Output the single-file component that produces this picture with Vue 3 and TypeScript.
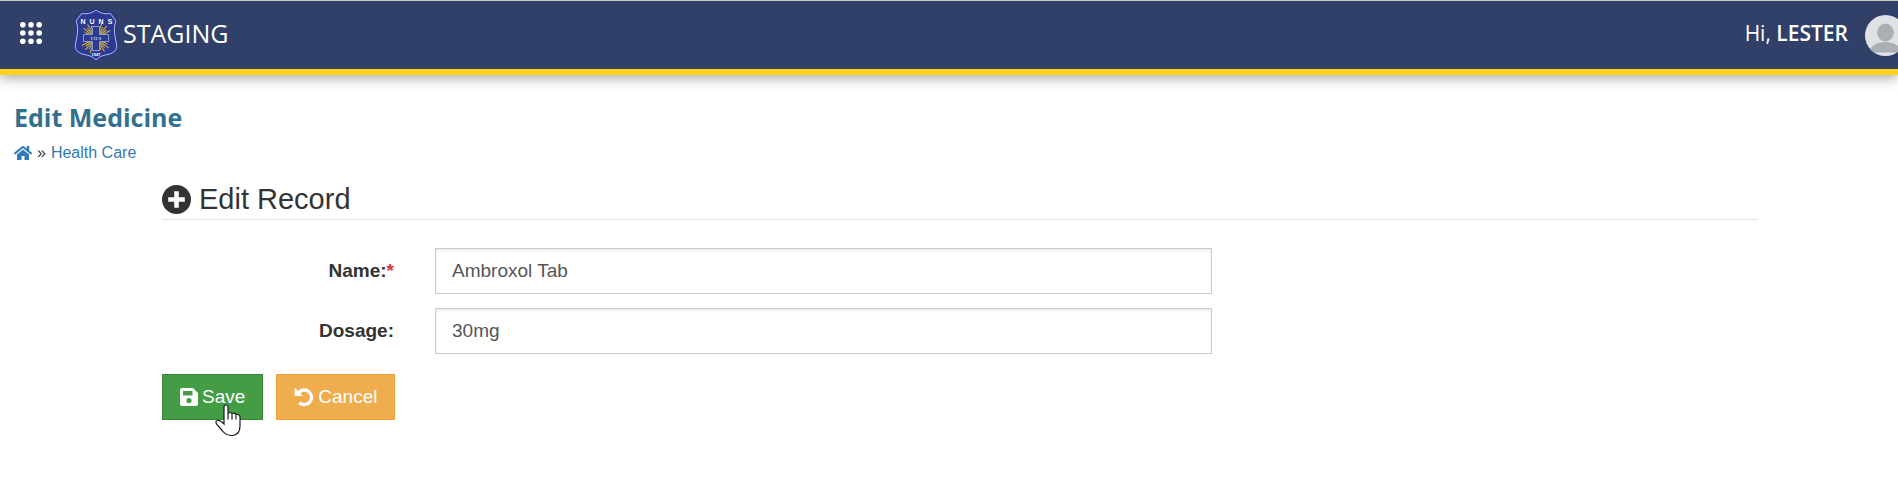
<script setup lang="ts">
import { ref } from 'vue'

const name = ref('Ambroxol Tab')
const dosage = ref('30mg')
const dots = [0, 1, 2, 3, 4, 5, 6, 7, 8]
const rays = [28, 38, 48, 58, 68, 112, 122, 132, 142, 152, 208, 218, 228, 238, 248, 292, 302, 312, 322, 332]
</script>

<template>
  <div class="page">
    <header class="topbar">
      <button class="apps" type="button" aria-label="Applications">
        <svg viewBox="0 0 22 22" width="22" height="22">
          <circle v-for="d in dots" :key="d" :cx="2.8 + (d % 3) * 8.2" :cy="2.8 + Math.floor(d / 3) * 8.2" r="2.8" />
        </svg>
      </button>
      <a class="brand" href="#">
        <svg class="crest" viewBox="0 0 46 54" width="46" height="54" aria-hidden="true">
          <path d="M23 1C18 5 13 5.500 8 4.500L2 13C5 20 3 28 1.500 36C0 43 4 46 11 47.500C17 48.500 20 50 23 53C26 50 29 48.500 35 47.500C42 46 46 43 44.500 36C43 28 41 20 44 13L38 4.500C33 5.500 28 5 23 1Z" fill="#2c3a91" stroke="#26348f" stroke-width="2" />
          <path d="M23 2C18 6 13 6 8.500 5.500L3 13C6 20 4 28 2.500 36C1 42 5 45 11 46.500C17 47.500 20 49 23 52C26 49 29 47.500 35 46.500C41 45 45 42 43.500 36C42 28 40 20 43 13L37.500 5.500C33 6 28 6 23 2Z" fill="none" stroke="#b5bfe6" stroke-width="1" />
          <g stroke="#d8b838" stroke-width="1">
            <line v-for="(r, i) in rays" :key="r" x1="27" y1="30" :x2="i % 2 ? 39 : 36" y2="30" :transform="`rotate(${r} 23 30)`" />
          </g>
          <path d="M19.500 18.500H26.500V26.500H35.500V33.500H26.500V42.500H19.500V33.500H10.500V26.500H19.500Z" fill="#2c3a91" stroke="#8c9ac8" stroke-width="1" />
          <g class="crest-name">
            <text x="10" y="16">N</text>
            <text x="19" y="16">U</text>
            <text x="28" y="16">N</text>
            <text x="37" y="16">S</text>
          </g>
          <text x="23" y="32" class="crest-mono">I H S</text>
          <text x="23" y="48" class="crest-year">1947</text>
        </svg>
        <span>STAGING</span>
      </a>
      <div class="user">
        <span class="greeting">Hi, <b>LESTER</b></span>
        <svg class="avatar" viewBox="0 0 41 41" width="41" height="41" role="img" aria-label="Profile">
          <defs><clipPath id="face"><circle cx="20.500" cy="20.500" r="20.500" /></clipPath></defs>
          <g clip-path="url(#face)">
            <rect width="41" height="41" fill="#dfe2e5" />
            <ellipse cx="20.500" cy="17.500" rx="8.300" ry="9" fill="#a9b0b5" />
            <path d="M3 37.500C6 30 13 27 20.500 27S35 30 38 37.500Z" fill="#a9b0b5" />
          </g>
        </svg>
      </div>
    </header>

    <main>
      <h1>Edit Medicine</h1>
      <nav class="crumbs" aria-label="Breadcrumb">
        <a href="#" aria-label="Home">
          <svg viewBox="0 0 576 512" width="18" height="16" fill="currentColor">
            <path d="M280 148L96 300V464a16 16 0 0 0 16 16H224a16 16 0 0 0 16-16V368a16 16 0 0 1 16-16h64a16 16 0 0 1 16 16v96a16 16 0 0 0 16 16H464a16 16 0 0 0 16-16V300L296 148a12 12 0 0 0-16 0zM572 251L488 182V44a12 12 0 0 0-12-12h-56a12 12 0 0 0-12 12v72L318 43a48 48 0 0 0-61 0L4 251a12 12 0 0 0-1 17l25 31a12 12 0 0 0 17 2L280 107a12 12 0 0 1 16 0L531 301a12 12 0 0 0 17-2l25-31a12 12 0 0 0-1-17z" />
          </svg>
        </a>
        <span>»</span>
        <a href="#">Health Care</a>
      </nav>

      <form class="record" @submit.prevent>
        <h2>
          <svg viewBox="0 0 28 28" width="29" height="29" aria-hidden="true">
            <circle cx="14" cy="14" r="14" fill="#333" />
            <path d="M11.800 6h4.400v5.800H22v4.400h-5.800V22h-4.400v-5.800H6v-4.400h5.800z" fill="#fff" />
          </svg>
          Edit Record
        </h2>
        <div class="field">
          <label for="name">Name:<span class="required">*</span></label>
          <input id="name" v-model="name" type="text" required />
        </div>
        <div class="field">
          <label for="dosage">Dosage:</label>
          <input id="dosage" v-model="dosage" type="text" />
        </div>
        <div class="actions">
          <button class="save" type="submit">
            <svg viewBox="0 0 18 18" width="18" height="18" aria-hidden="true">
              <path fill="currentColor" fill-rule="evenodd" d="M2 0H13L18 5V16a2 2 0 0 1-2 2H2a2 2 0 0 1-2-2V2a2 2 0 0 1 2-2zM3 3V7.500H12.500V3zM9 10a2.600 2.600 0 1 0 0 5.200a2.600 2.600 0 0 0 0-5.200z" />
            </svg>
            Save
            <svg class="pointer" viewBox="0 0 26 32" width="26" height="32" aria-hidden="true">
              <path d="M9 20V3Q9 1 11 1T13 3V10Q13 8.500 15 8.500T17 10.500Q17 9 19 9.200T21 11.500Q21 10 23 10.500T25 13V22Q25 31 17 31.500Q11 31.500 7.500 27L1.500 20Q0 17 2.500 16.500Q5 16 9 20Z" fill="#fff" stroke="#1c1c28" stroke-width="1.200" />
              <path d="M13 10V15.500M17 10.500V15.500M21 11.500V15.500" stroke="#1c1c28" stroke-width="1.200" fill="none" />
            </svg>
          </button>
          <button class="cancel" type="button">
            <svg viewBox="0 0 20 20" width="20" height="20" aria-hidden="true">
              <path d="M4.500 5.800A7.300 7.300 0 1 1 5.300 15.700" fill="none" stroke="currentColor" stroke-width="3.400" />
              <path d="M1 1.500V8.500H8Z" fill="currentColor" stroke="currentColor" stroke-linejoin="round" />
            </svg>
            Cancel
          </button>
        </div>
      </form>
    </main>
  </div>
</template>

<style>
body {
  margin: 0;
  background: #fff;
}
</style>

<style scoped>
* {
  box-sizing: border-box;
}
.page {
  overflow-x: hidden;
  font-family: "Liberation Sans", Arial, sans-serif;
  color: #333;
}
a {
  color: #337ab7;
  text-decoration: none;
}
.topbar {
  display: flex;
  align-items: center;
  height: 75px;
  padding-left: 20px;
  background: #314069;
  border-top: 1px solid #c5c9c8;
  border-bottom: 6px solid #ffd21c;
  box-shadow: 0 3px 12px rgba(0, 0, 0, 0.35);
  color: #fff;
  font-family: "Open Sans", sans-serif;
}
.apps {
  display: flex;
  margin: 0 31px 4px 0;
  padding: 0;
  border: 0;
  background: none;
  fill: #fff;
}
.brand {
  display: flex;
  align-items: center;
  gap: 4px;
  color: #fff;
  font-size: 25px;
  line-height: 36px;
}
.brand span {
  padding-bottom: 4px;
}
.crest text {
  fill: #fff;
  text-anchor: middle;
  font-family: "Liberation Sans", sans-serif;
}
.crest .crest-name {
  font-size: 7px;
  font-weight: 700;
}
.crest .crest-mono {
  font-family: "Liberation Serif", serif;
  font-size: 5px;
}
.crest .crest-year {
  font-size: 4px;
  font-weight: 700;
}
.user {
  display: flex;
  align-items: center;
  gap: 17px;
  margin-left: auto;
  margin-right: -8px;
}
.greeting {
  padding-bottom: 4px;
  font-size: 21px;
  line-height: 30px;
}
.greeting b {
  font-weight: 600;
}
main {
  padding: 24px 14px;
}
h1 {
  margin: 0;
  color: #31708f;
  font: 700 25px/36px "Open Sans", sans-serif;
}
.crumbs {
  display: flex;
  align-items: center;
  gap: 5px;
  margin-top: 7px;
  font-size: 16px;
  line-height: 22px;
}
.crumbs svg {
  display: block;
}
.record {
  margin: 17px 126px 0 148px;
}
h2 {
  display: flex;
  align-items: center;
  gap: 8px;
  margin: 0 0 28px;
  padding-bottom: 2px;
  border-bottom: 1px solid #e5e5e5;
  font-size: 29px;
  font-weight: 400;
  line-height: 36px;
}
.field {
  display: grid;
  grid-template-columns: 232fr 777fr 505fr;
  column-gap: 41px;
  align-items: center;
  margin-bottom: 14px;
}
.field label {
  text-align: right;
  font-size: 19px;
  font-weight: 700;
}
.required {
  color: #dc3545;
}
.field input {
  width: 100%;
  height: 46px;
  padding: 0 16px;
  border: 1px solid #ccc;
  border-radius: 0;
  box-shadow: inset 0 2px 3px rgba(0, 0, 0, 0.08);
  outline: 0;
  color: #555;
  font: 19px "Liberation Sans", Arial, sans-serif;
}
.actions {
  display: flex;
  gap: 13px;
  margin-top: 20px;
}
.actions button {
  position: relative;
  display: flex;
  align-items: center;
  gap: 4px;
  height: 46px;
  padding: 0 17px;
  border: 1px solid;
  color: #fff;
  font: 19px "Liberation Sans", Arial, sans-serif;
}
.actions .save {
  background: #449d44;
  border-color: #398439;
}
.actions .cancel {
  background: #f0ad4e;
  border-color: #eea236;
}
.actions .pointer {
  position: absolute;
  top: 29px;
  left: 52px;
}
</style>
